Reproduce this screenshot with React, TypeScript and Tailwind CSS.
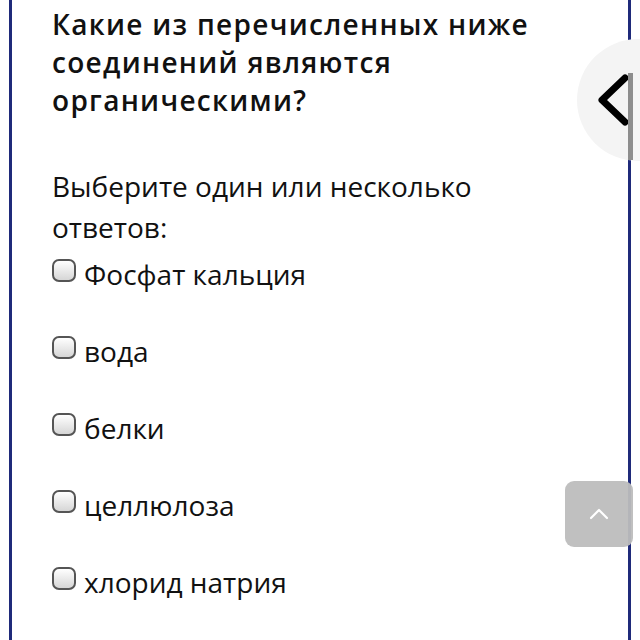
import React from "react";

const options = ["Фосфат кальция", "вода", "белки", "целлюлоза", "хлорид натрия"];

function Box() {
  return (
    <span className="inline-block w-[24px] h-[23px] shrink-0 rounded-[7px] border-[2px] border-[#555] bg-gradient-to-b from-white to-[#d6d6d6]" />
  );
}

export default function App() {
  return (
    <div className="relative w-[640px] h-[640px] overflow-hidden bg-white" style={{ fontFamily: '"Open Sans", sans-serif' }}>
      <div className="ml-[9px] w-[622px] h-full border-l-[3px] border-r-[3px] border-[#1f2a7a] pl-[40px] text-[#111]">
        <h1 className="pt-[5px] text-[28px] leading-[38px] font-semibold tracking-[1.3px] text-[#111]">
          Какие из перечисленных ниже<br />соединений являются<br />органическими?
        </h1>
        <p className="mt-[47px] text-[28px] leading-[41px]">
          Выберите один или несколько<br />ответов:
        </p>
        <div className="mt-[8px] flex flex-col">
          {options.map((o) => (
            <div key={o} className="flex items-start gap-[8px] h-[77px]">
              <span className="mt-[3px]"><Box /></span>
              <span className="text-[28px] leading-[36px]">{o}</span>
            </div>
          ))}
        </div>
      </div>

      {/* back circle */}
      <div className="absolute left-[577px] top-[39px] w-[122px] h-[122px] rounded-full bg-[#f4f4f4]" />
      <svg className="absolute left-[594px] top-[72px]" width="40" height="54" viewBox="0 0 40 54">
        <polyline points="31,6 8,28 31,50" fill="none" stroke="#000" strokeWidth="7" strokeLinecap="round" strokeLinejoin="round" />
      </svg>
      {/* scrollbar */}
      <div className="absolute left-[628px] top-[73px] w-[5px] h-[87px] bg-[#8d8d8d]" />

      {/* scroll-to-top */}
      <div className="absolute left-[565px] top-[481px] w-[68px] h-[66px] rounded-[9px] bg-[#bdbdbd]/95 flex items-center justify-center">
        <svg width="22" height="14" viewBox="0 0 22 14">
          <polyline points="3,11 11,3 19,11" fill="none" stroke="#fff" strokeWidth="2.2" strokeLinecap="round" strokeLinejoin="round" />
        </svg>
      </div>
    </div>
  );
}
